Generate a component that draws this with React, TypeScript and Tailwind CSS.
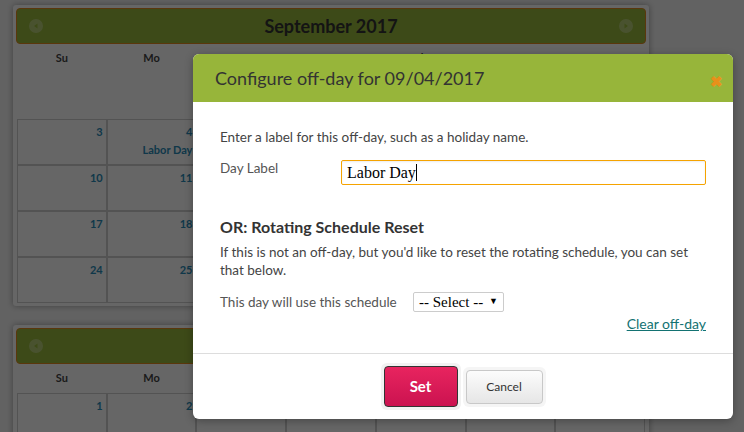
import React from 'react';

const days = ['Su', 'Mo', 'Tu', 'We', 'Th', 'Fr', 'Sa'];

type Cell = { n?: number; label?: string } | null;

const september: Cell[][] = [
    [null, null, null, null, null, { n: 1 }, { n: 2 }],
    [{ n: 3 }, { n: 4, label: 'Labor Day' }, { n: 5 }, { n: 6 }, { n: 7 }, { n: 8 }, { n: 9 }],
    [{ n: 10 }, { n: 11 }, { n: 12 }, { n: 13 }, { n: 14 }, { n: 15 }, { n: 16 }],
    [{ n: 17 }, { n: 18 }, { n: 19 }, { n: 20 }, { n: 21 }, { n: 22 }, { n: 23 }],
    [{ n: 24 }, { n: 25 }, { n: 26 }, { n: 27 }, { n: 28 }, { n: 29 }, { n: 30 }],
];

const october: Cell[][] = [
    [{ n: 1 }, { n: 2 }, { n: 3 }, { n: 4 }, { n: 5 }, { n: 6 }, { n: 7 }],
];

function Arrow({ dir }: { dir: 'left' | 'right' }) {
    return (
        <span className="w-[14px] h-[14px] rounded-full bg-white/30 flex items-center justify-center">
            <svg width="6" height="6" viewBox="0 0 6 6">
                {dir === 'left' ? <path d="M4.5 0.5 L1 3 L4.5 5.5 Z" fill="#98b93c" /> : <path d="M1.5 0.5 L5 3 L1.5 5.5 Z" fill="#98b93c" />}
            </svg>
        </span>
    );
}

function Calendar({ title, weeks }: { title: string; weeks: Cell[][] }) {
    return (
        <div className="w-[636px] bg-white rounded-[3px] p-[3px] shadow-[0_0_6px_rgba(0,0,0,0.35)]">
            {/* Month header */}
            <div className="h-[36px] rounded-[4px] border border-[#e08a1e] bg-[#98b93c] flex items-center justify-between px-[12px]">
                <Arrow dir="left" />
                <span className="text-[18px] font-bold text-[#333]">{title}</span>
                <Arrow dir="right" />
            </div>
            <div className="grid grid-cols-7 h-[29px] items-center text-[11px] font-bold text-[#444] px-[1px]">
                {days.map(d => (
                    <div key={d} className="text-center">{d}</div>
                ))}
            </div>
            <div className="px-[1px] flex flex-col">
                {weeks.map((w, i) => (
                    <div key={i} className="grid grid-cols-7">
                        {w.map((c, j) =>
                            c ? (
                                <div key={j} className="h-[46px] border border-[#cfcfcf] px-[3px] pt-[4px] text-right text-[11px] font-bold text-[#2a8cb8]">
                                    <div>{c.n}</div>
                                    {c.label && <div className="text-[11px] leading-[14px] mt-[2px]">{c.label}</div>}
                                </div>
                            ) : (
                                <div key={j} className="h-[46px]" />
                            )
                        )}
                    </div>
                ))}
            </div>
        </div>
    );
}

export default function App() {
    return (
        <div className="relative w-[744px] h-[432px] overflow-hidden bg-[#f5f5f5] font-['Lato','Open_Sans',sans-serif]">
            <div className="pl-[13px] pt-[5px] flex flex-col gap-[19px]">
                <Calendar title="September 2017" weeks={september} />
                <Calendar title="October 2017" weeks={october} />
            </div>

            {/* Overlay */}
            <div className="absolute inset-0 bg-black/60" />

            {/* Modal */}
            <div className="absolute left-[193px] top-[54px] w-[540px] h-[365px] bg-white rounded-[6px] overflow-hidden flex flex-col shadow-[0_2px_8px_rgba(0,0,0,0.3)]">
                <div className="h-[48px] bg-[#97b53a] flex items-center justify-between pl-[22px] pr-[10px] shrink-0">
                    <h2 className="text-[18px] text-[#333] font-normal">Configure off-day for 09/04/2017</h2>
                    <span className="text-[#e8901a] text-[15px] font-bold mt-[6px]">✖</span>
                </div>

                <div className="flex-1 pl-[27px] pr-[27px] pt-[26px] text-[13.5px] text-[#444]">
                    <p className="leading-[18px]">Enter a label for this off-day, such as a holiday name.</p>
                    <div className="flex items-start mt-[14px]">
                        <label className="w-[121px] -mt-[2px] text-[#555]">Day Label</label>
                        <div className="flex-1 h-[25px] border border-[#f5a300] rounded-[2px] shadow-[inset_0_1px_2px_rgba(0,0,0,0.08)] flex items-center px-[5px] font-['Liberation_Serif',serif] text-[16px] text-black">
                            Labor Day<span className="w-px h-[17px] bg-black" />
                        </div>
                    </div>

                    <h3 className="mt-[32px] text-[16px] font-bold text-[#333] leading-[20px]">OR: Rotating Schedule Reset</h3>
                    <p className="mt-[6px] leading-[18px] pr-[10px]">
                        If this is not an off-day, but you'd like to reset the rotating schedule, you can set that below.
                    </p>
                    <div className="flex items-center mt-[13px]">
                        <span className="w-[193px] text-[#555]">This day will use this schedule</span>
                        <div className="w-[91px] h-[20px] border border-[#ccc] rounded-[2px] flex items-center justify-between pl-[5px] pr-[5px] font-['Liberation_Serif',serif] text-[15px] text-black">
                            <span>-- Select --</span>
                            <span className="text-[9px]">▼</span>
                        </div>
                    </div>
                    <div className="flex justify-end mt-[1px]">
                        <a href="#" className="text-[#137272] underline text-[14px]">Clear off-day</a>
                    </div>
                </div>

                <div className="h-[66px] border-t border-[#ddd] flex items-center justify-center gap-[2px] shrink-0">
                    <div className="p-[3px] rounded-[6px] bg-[#f2f2f2]">
                        <button className="w-[74px] h-[41px] rounded-[4px] border border-[#333] bg-gradient-to-b from-[#e8245f] to-[#cb1250] text-white font-bold text-[15px]">
                            Set
                        </button>
                    </div>
                    <div className="p-[3px] rounded-[6px] bg-[#f5f5f5]">
                        <button className="w-[77px] h-[34px] rounded-[4px] border border-[#c8c8c8] bg-gradient-to-b from-[#fcfcfc] to-[#e6e6e6] text-[#333] text-[12px]">
                            Cancel
                        </button>
                    </div>
                </div>
            </div>
        </div>
    );
}
